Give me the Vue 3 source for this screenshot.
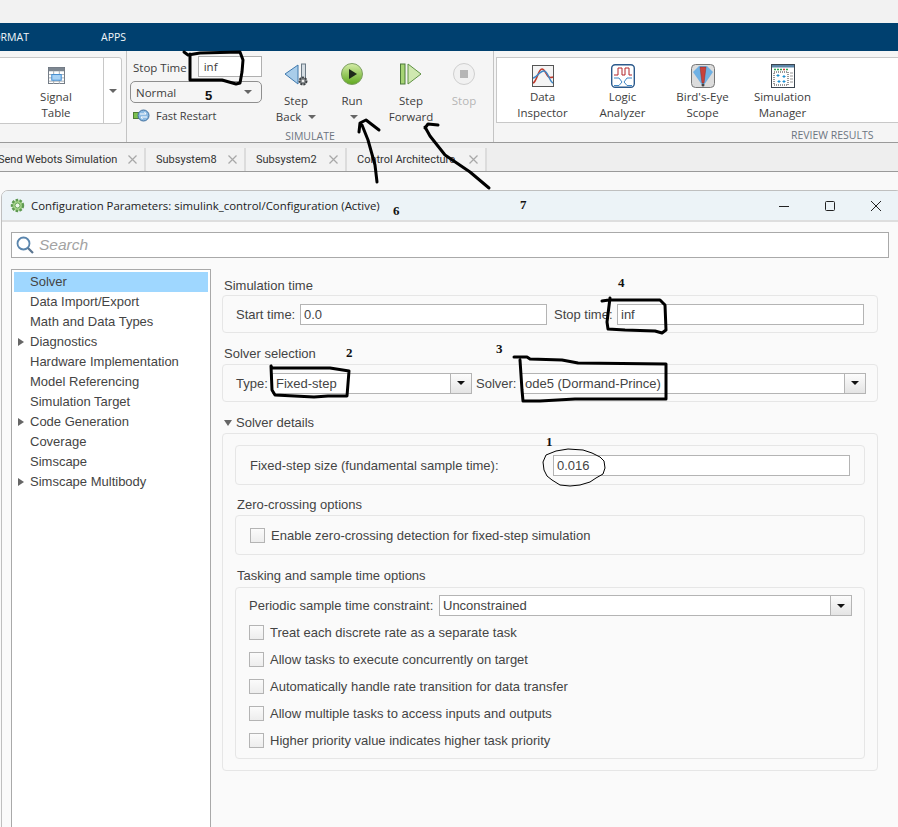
<script setup>
const tabs = [
  { name: 'Send Webots Simulation', width: 148, first: true },
  { name: 'Subsystem8', width: 100 },
  { name: 'Subsystem2', width: 101 },
  { name: 'Control Architecture', width: 140 }
];

const reviewTools = [
  { top: 'Data', bottom: 'Inspector', kind: 'data' },
  { top: 'Logic', bottom: 'Analyzer', kind: 'logic' },
  { top: "Bird's-Eye", bottom: 'Scope', kind: 'bird' },
  { top: 'Simulation', bottom: 'Manager', kind: 'manager' }
];

const treeItems = [
  { name: 'Solver', selected: true },
  { name: 'Data Import/Export' },
  { name: 'Math and Data Types' },
  { name: 'Diagnostics', arrow: true },
  { name: 'Hardware Implementation' },
  { name: 'Model Referencing' },
  { name: 'Simulation Target' },
  { name: 'Code Generation', arrow: true },
  { name: 'Coverage' },
  { name: 'Simscape' },
  { name: 'Simscape Multibody', arrow: true }
];

const taskOptions = [
  'Treat each discrete rate as a separate task',
  'Allow tasks to execute concurrently on target',
  'Automatically handle rate transition for data transfer',
  'Allow multiple tasks to access inputs and outputs',
  'Higher priority value indicates higher task priority'
];

// hand drawn numbers on top of the screenshot
const marks = [
  { text: '5', x: 205, y: 89, sans: true },
  { text: '6', x: 393, y: 204 },
  { text: '7', x: 520, y: 198 },
  { text: '4', x: 618, y: 276 },
  { text: '3', x: 496, y: 342 },
  { text: '2', x: 346, y: 346 },
  { text: '1', x: 546, y: 435 }
];

const strokes = [
  'M184 52 L188 55 L200 53 L240 52 L243 60 L242 72 L240 83 L236 84 L222 80 L190 80 L190 54',
  'M377 182 L375 165 L368 140 L362 125 M359 132 L360 123 L366 120 L379 130',
  'M489 188 L470 172 L445 155 L430 136 L425 127 M425 128 L428 124 L438 125',
  'M602 301 L609 300 L640 300 L660 300 L665 305 L666 330 L662 333 L655 331 L625 330 L608 329 L607 322 L610 298',
  'M514 357 L527 357 L530 359 L562 360 L578 363 L666 364 L666 399 L575 399 L540 401 L523 401 L522 390 L520 360',
  'M271 366 L272 368 L330 368 L349 371 L347 396 L328 396 L314 397 L275 395 L272 390 L271 366'
];

const ring = 'M556 451 L568 449 L583 450 L592 453 L600 457 L604 461 L605 468 L603 474 L596 478 L590 482 L580 485 L570 486 L560 485 L552 480 L547 476 L544 470 L543 462 L546 455 Z';
</script>

<template>
  <div class="page">
    <div class="top-gap"></div>

    <div class="menu-bar">
      <span class="menu-format">FORMAT</span>
      <span class="menu-apps">APPS</span>
    </div>

    <div class="ribbon">
      <div class="group group-prepare">
        <div class="panel prepare-panel">
          <div class="tool signal-tool">
            <svg width="17" height="17" viewBox="0 0 18 18">
              <rect x="0.5" y="0.5" width="17" height="17" fill="#fff" stroke="#6d7680" />
              <rect x="1" y="1" width="16" height="3.5" fill="#7d8791" />
              <path d="M1 8h16M1 11.500h16M1 15h16M6 4v14M12 4v14" stroke="#a5acb3" fill="none" />
              <rect x="4" y="8" width="10" height="6" fill="#a8d2f5" stroke="#3f8bd0" />
            </svg>
            <div class="tool-label">Signal<br />Table</div>
          </div>
          <div class="prepare-more"><i class="caret"></i></div>
        </div>
        <div class="group-label prepare-label">PREPARE</div>
      </div>

      <div class="group group-simulate">
        <div class="sim-row">
          <div class="sim-settings">
            <div class="stop-row">
              <span class="stop-text">Stop Time</span>
              <div class="stop-input">inf</div>
            </div>
            <div class="mode-select">
              <span>Normal</span>
              <i class="caret"></i>
            </div>
            <div class="fast-restart">
              <svg width="17" height="13" viewBox="0 0 17 13">
                <rect x="0.500" y="3.500" width="5" height="6" fill="#7cc04f" stroke="#4e7d35" />
                <circle cx="10.500" cy="6.500" r="5.500" fill="#8dbbe3" stroke="#3f6f9e" />
                <path d="M7 5h6l-1.500-2M14 8H8l1.500 2" stroke="#fff" fill="none" />
              </svg>
              <span>Fast Restart</span>
            </div>
          </div>

          <div class="sim-button back-button">
            <svg width="24" height="26" viewBox="0 0 24 26">
              <path d="M14 5 L1 14 L14 24 Z" fill="#a9cdea" stroke="#3f79ad" stroke-linejoin="round" />
              <rect x="17.500" y="4" width="4" height="16" fill="#d5dde3" stroke="#6b7a86" />
              <circle cx="19" cy="21" r="3.500" fill="#7f8487" stroke="#3e4245" stroke-width="2" stroke-dasharray="2 1" />
              <circle cx="19" cy="21" r="1.300" fill="#eee" />
            </svg>
            <div class="tool-label">Step<br />Back <i class="caret inline-caret"></i></div>
          </div>

          <div class="sim-button run-button">
            <svg width="24" height="26" viewBox="0 0 24 26">
              <defs>
                <linearGradient id="runGreen" x1="0" y1="0" x2="0" y2="1">
                  <stop offset="0" stop-color="#d6eda8" />
                  <stop offset="1" stop-color="#5fa81e" />
                </linearGradient>
              </defs>
              <circle cx="12" cy="14" r="10.500" fill="url(#runGreen)" stroke="#7d9f63" />
              <path d="M9 9 L17 14 L9 19 Z" fill="#1e2a1a" />
            </svg>
            <div class="tool-label">Run<br /><i class="caret inline-caret"></i></div>
          </div>

          <div class="sim-button forward-button">
            <svg width="24" height="26" viewBox="0 0 24 26">
              <rect x="1.500" y="4" width="4.500" height="20" fill="#a6d474" stroke="#4d7a3a" />
              <path d="M9 4 L22 14 L9 24 Z" fill="#cfe8b0" stroke="#5f9143" stroke-linejoin="round" />
            </svg>
            <div class="tool-label">Step<br />Forward</div>
          </div>

          <div class="sim-button stop-button">
            <svg width="24" height="26" viewBox="0 0 24 26">
              <circle cx="12" cy="14" r="10.500" fill="#f1f1f1" stroke="#cfcfcf" />
              <rect x="8" y="10" width="8" height="8" fill="#b5b5b5" />
            </svg>
            <div class="tool-label disabled">Stop</div>
          </div>
        </div>
        <div class="group-label simulate-label">SIMULATE</div>
      </div>

      <div class="group group-review">
        <div class="panel review-panel">
          <div v-for="tool in reviewTools" :key="tool.top" class="tool review-tool">
            <svg v-if="tool.kind === 'data'" width="24" height="24" viewBox="0 0 24 24">
              <rect x="1.500" y="1.500" width="21" height="21" fill="#f4f4f4" stroke="#555" />
              <path d="M2 19 C6 18 7 5 11 5 C15 5 15 16 22 13" stroke="#c0392b" stroke-width="1.500" fill="none" />
              <path d="M2 14 C6 14 8 7 13 7 C17 7 18 17 22 19" stroke="#3f86c4" stroke-width="1.500" fill="none" />
            </svg>
            <svg v-else-if="tool.kind === 'logic'" width="24" height="24" viewBox="0 0 24 24">
              <rect x="0.700" y="0.700" width="22.600" height="22.600" rx="3.500" fill="#fff" stroke="#2c5a8c" stroke-width="1.400" />
              <path d="M3 11H7V4H11V11H14V4H18V11H21" stroke="#b3262a" fill="none" />
              <path d="M3 14H8L11 18L8 21.500H3M21 14H16L13 18L16 21.500H21" stroke="#3f86c4" fill="none" />
            </svg>
            <svg v-else-if="tool.kind === 'bird'" width="24" height="24" viewBox="0 0 24 24">
              <rect x="0.500" y="0.500" width="23" height="23" rx="4" fill="#dcdcdc" stroke="#777" />
              <path d="M2 8 L8 2 H16 L22 8 L13 21 H11 Z" fill="#6fb1e4" />
              <path d="M9 3 H15 L13 19 H11 Z" fill="#c8423c" stroke="#8e2b27" stroke-width="0.500" />
              <circle cx="12" cy="21" r="1.500" fill="#444" />
            </svg>
            <svg v-else width="24" height="24" viewBox="0 0 24 24">
              <rect x="0.500" y="0.500" width="23" height="23" fill="#fff" stroke="#3c4650" />
              <rect x="1" y="1" width="22" height="2.500" fill="#5c86a8" />
              <path d="M3 5.500h2M6 5.500h2M9 5.500h2" stroke="#2fa84f" stroke-width="1.500" />
              <path d="M12 5.500h2" stroke="#d83a3a" stroke-width="1.500" />
              <path d="M15 5.500h2" stroke="#2fa84f" stroke-width="1.500" />
              <rect x="3" y="8" width="14" height="13" fill="#fff" stroke="#333" stroke-dasharray="1 1" />
              <path d="M7 10v3M5.500 11.500h3M13 11v3M11.500 12.500h3M8 16v3M6.500 17.500h3M13 16v3M11.500 17.500h3" stroke="#1b8fd1" />
              <path d="M19 9h3M19 12h3M19 15h3M19 18h3" stroke="#999" />
            </svg>
            <div class="tool-label">{{ tool.top }}<br />{{ tool.bottom }}</div>
          </div>
        </div>
        <div class="group-label review-label">REVIEW RESULTS</div>
      </div>
    </div>

    <div class="tab-strip">
      <div v-for="tab in tabs" :key="tab.name" class="tab" :class="{ 'tab-first': tab.first }" :style="{ width: tab.width + 'px' }">
        <span class="tab-name">{{ tab.name }}</span>
        <svg class="tab-close" width="9" height="9" viewBox="0 0 9 9">
          <path d="M0.500 0.500L8.500 8.500M8.500 0.500L0.500 8.500" stroke="#a8a8a8" stroke-width="1.200" fill="none" />
        </svg>
      </div>
    </div>

    <div class="dialog">
      <div class="title-bar">
        <svg width="15" height="15" viewBox="0 0 15 15">
          <circle cx="7.500" cy="7.500" r="5.500" fill="#a6d48a" stroke="#5f9a52" stroke-width="2.400" stroke-dasharray="2.500 1.400" />
          <circle cx="7.500" cy="7.500" r="2.500" fill="#eef6e8" stroke="#6aa65a" />
        </svg>
        <span class="title-text">Configuration Parameters: simulink_control/Configuration (Active)</span>
        <div class="window-controls">
          <svg width="12" height="12" viewBox="0 0 12 12"><path d="M1 6.500H11" stroke="#222" fill="none" /></svg>
          <svg width="12" height="12" viewBox="0 0 12 12"><rect x="1.500" y="1.500" width="9" height="9" rx="1" stroke="#222" fill="none" /></svg>
          <svg width="12" height="12" viewBox="0 0 12 12"><path d="M1 1L11 11M11 1L1 11" stroke="#222" fill="none" /></svg>
        </div>
      </div>

      <div class="dialog-body">
        <div class="search-box">
          <svg width="18" height="18" viewBox="0 0 18 18">
            <circle cx="7.500" cy="7.500" r="6" fill="none" stroke="#5a85ad" stroke-width="1.800" />
            <path d="M12 12L17 17" stroke="#5a7590" stroke-width="2.200" fill="none" />
          </svg>
          <span>Search</span>
        </div>

        <div class="columns">
          <div class="tree">
            <div v-for="item in treeItems" :key="item.name" class="tree-row" :class="{ selected: item.selected }">
              <i v-if="item.arrow" class="tree-arrow"></i>
              <span>{{ item.name }}</span>
            </div>
          </div>

          <div class="settings">
            <div class="heading">Simulation time</div>
            <div class="box row-box">
              <span class="field-label start-label">Start time:</span>
              <div class="input start-input">0.0</div>
              <span class="field-label stop-label">Stop time:</span>
              <div class="input stop-time-input">inf</div>
            </div>

            <div class="heading solver-heading">Solver selection</div>
            <div class="box row-box">
              <span class="field-label type-label">Type:</span>
              <div class="input combo type-combo">Fixed-step<b class="combo-btn"><i></i></b></div>
              <span class="field-label solver-label">Solver:</span>
              <div class="input combo solver-combo">ode5 (Dormand-Prince)<b class="combo-btn"><i></i></b></div>
            </div>

            <div class="details-heading"><i class="open-arrow"></i>Solver details</div>
            <div class="box details-box">
              <div class="box step-box">
                <span class="field-label step-label">Fixed-step size (fundamental sample time):</span>
                <div class="input step-input">0.016</div>
              </div>

              <div class="heading sub-heading">Zero-crossing options</div>
              <div class="box zero-box">
                <label class="check-row"><i class="check"></i>Enable zero-crossing detection for fixed-step simulation</label>
              </div>

              <div class="heading sub-heading tasking-heading">Tasking and sample time options</div>
              <div class="box task-box">
                <div class="periodic-row">
                  <span class="field-label periodic-label">Periodic sample time constraint:</span>
                  <div class="input combo periodic-combo">Unconstrained<b class="combo-btn"><i></i></b></div>
                </div>
                <label v-for="option in taskOptions" :key="option" class="check-row task-row"><i class="check"></i>{{ option }}</label>
              </div>
            </div>
          </div>
        </div>
      </div>
    </div>

    <svg class="scribbles" width="898" height="827" viewBox="0 0 898 827">
      <path v-for="(d, i) in strokes" :key="i" :d="d" fill="none" stroke="#000" stroke-width="3" stroke-linejoin="round" stroke-linecap="round" />
      <path :d="ring" fill="none" stroke="#000" stroke-width="1" />
    </svg>
    <span v-for="mark in marks" :key="mark.text" class="mark" :class="{ 'mark-sans': mark.sans }" :style="{ left: mark.x + 'px', top: mark.y + 'px' }">{{ mark.text }}</span>
  </div>
</template>

<style>
html,
body {
  margin: 0;
  background: #f8f8f8;
}
</style>

<style scoped>
.page {
  position: relative;
  width: 898px;
  height: 827px;
  overflow: hidden;
  background: #f9f9f9;
  font-family: "Open Sans", "Noto Sans", sans-serif;
  color: #3d3d3d;
}

.top-gap {
  height: 23px;
  background: #f2f2f2;
}

.menu-bar {
  height: 28px;
  background: #00406f;
  color: #f2f6fa;
  font-size: 10.500px;
  line-height: 28px;
  display: flex;
}

.menu-format {
  margin-left: -13px;
  width: 114px;
}

.ribbon {
  height: 92px;
  box-sizing: border-box;
  background: #f5f5f5;
  border-bottom: 1px solid #9a9a9a;
  display: flex;
  font-size: 11.500px;
}

.group {
  display: flex;
  flex-direction: column;
  padding-top: 6px;
  box-sizing: border-box;
  height: 91px;
}

.panel {
  height: 67px;
  box-sizing: border-box;
  background: #fff;
  border: 1px solid #c8c8c8;
  display: flex;
}

.group-label {
  font-size: 10.500px;
  color: #6c7480;
  line-height: 14px;
  margin-top: 5px;
  text-align: center;
  white-space: nowrap;
}

.group-prepare {
  width: 126px;
  flex: none;
}

.prepare-panel {
  width: 123px;
  margin-left: -1px;
  border-radius: 0 3px 3px 0;
}

.prepare-label {
  text-align: left;
  margin-left: -48px;
}

.tool {
  display: flex;
  flex-direction: column;
  align-items: center;
}

.tool-label {
  line-height: 16px;
  text-align: center;
  color: #3d3d3d;
  white-space: nowrap;
}

.signal-tool {
  width: 103px;
  padding-top: 9px;
  padding-left: 9px;
  box-sizing: border-box;
}

.signal-tool .tool-label {
  margin-top: 5px;
}

.prepare-more {
  flex: 1;
  border-left: 1px solid #c8c8c8;
  display: flex;
  align-items: center;
  justify-content: center;
  height: 65px;
  box-sizing: border-box;
}

.caret {
  display: inline-block;
  width: 0;
  height: 0;
  border-left: 4px solid transparent;
  border-right: 4px solid transparent;
  border-top: 4px solid #666;
}

.inline-caret {
  margin-left: 4px;
  vertical-align: 2px;
}

.group-simulate {
  width: 368px;
  flex: none;
  border-left: 1px solid #c4c4c4;
  border-right: 1px solid #c4c4c4;
  padding-top: 5px;
}

.sim-row {
  display: flex;
  height: 69px;
}

.sim-settings {
  width: 141px;
  flex: none;
  padding-left: 3px;
  box-sizing: border-box;
}

.stop-row {
  display: flex;
  align-items: center;
  gap: 11px;
  margin-left: 3px;
  height: 21px;
}

.stop-text {
  padding-top: 2px;
}

.stop-input {
  width: 64px;
  height: 21px;
  box-sizing: border-box;
  border: 1px solid #b0b0b0;
  background: #fff;
  line-height: 19px;
  padding-left: 5px;
}

.mode-select {
  margin-top: 4px;
  width: 132px;
  height: 22px;
  box-sizing: border-box;
  border: 1px solid #8f8f8f;
  border-radius: 5px;
  display: flex;
  align-items: center;
  justify-content: space-between;
  padding: 0 9px 0 5px;
}

.fast-restart {
  display: flex;
  align-items: center;
  gap: 6px;
  margin: 5px 0 0 3px;
  font-size: 11px;
}

.sim-button {
  display: flex;
  flex-direction: column;
  align-items: center;
  flex: none;
  padding-top: 4px;
}

.sim-button .tool-label {
  margin-top: 7px;
}

.back-button {
  width: 56px;
}

.run-button {
  width: 56px;
}

.forward-button {
  width: 62px;
}

.stop-button {
  width: 44px;
}

.disabled {
  color: #b5b5b5;
}

.simulate-label {
  margin: 4px 0 0 -1px;
  width: 368px;
}

.group-review {
  flex: 1;
  padding-left: 2px;
}

.review-panel {
  width: 420px;
  padding-left: 5.500px;
  padding-top: 6px;
  border-right: none;
}

.review-tool {
  width: 80px;
}

.review-tool .tool-label {
  margin-top: 1px;
}

.review-label {
  text-align: left;
  margin-left: 295px;
}

.tab-strip {
  height: 29px;
  box-sizing: border-box;
  padding-top: 5px;
  display: flex;
  font-family: Roboto, sans-serif;
  font-size: 11px;
  background: #eeeeee;
  border-bottom: 1px solid #9a9a9a;
}

.tab {
  height: 23px;
  box-sizing: border-box;
  background: #f2f2f2;
  border-right: 2px solid #dcdcdc;
  display: flex;
  align-items: center;
  justify-content: space-between;
  padding: 0 7px 0 10px;
  color: #333;
  white-space: nowrap;
  flex: none;
}

.tab:first-child {
  margin-left: -2px;
}

.tab-first {
  padding-left: 0;
}

.dialog {
  margin: 18px 0 0 1px;
  width: 900px;
  border: 1px solid #bfbfbf;
  border-radius: 7px 7px 0 0;
  overflow: hidden;
  background: #fafafa;
  font-family: "Liberation Sans", Arial, sans-serif;
  font-size: 13px;
  height: 640px;
}

.title-bar {
  height: 31px;
  box-sizing: border-box;
  background: #ecf3f7;
  border-bottom: 2px solid #dedede;
  display: flex;
  align-items: center;
  padding-left: 8px;
  font-family: "Open Sans", sans-serif;
  font-size: 11.400px;
  color: #222;
}

.title-text {
  margin-left: 6px;
}

.window-controls {
  margin-left: auto;
  margin-right: 20px;
  display: flex;
  gap: 34px;
}

.dialog-body {
  padding: 10px 0 0 9px;
}

.search-box {
  width: 878px;
  height: 26px;
  box-sizing: border-box;
  border: 1px solid #a9a9a9;
  background: #fff;
  display: flex;
  align-items: center;
  gap: 5px;
  padding-left: 4px;
  font-size: 15.500px;
  font-style: italic;
  color: #a3a3a3;
}

.columns {
  display: flex;
  margin-top: 11px;
}

.tree {
  width: 200px;
  height: 560px;
  box-sizing: border-box;
  flex: none;
  border: 1px solid #a9a9a9;
  background: #fff;
  padding: 2px;
}

.tree-row {
  position: relative;
  height: 20px;
  line-height: 20px;
  padding-left: 16px;
  color: #444;
}

.selected {
  background: #9fd7ff;
}

.tree-arrow {
  position: absolute;
  left: 4px;
  top: 6px;
  width: 0;
  height: 0;
  border-top: 4px solid transparent;
  border-bottom: 4px solid transparent;
  border-left: 6px solid #666;
}

.settings {
  width: 656px;
  margin-left: 11px;
  flex: none;
}

.heading {
  line-height: 16px;
  margin: 9px 0 1px 2px;
  color: #444;
}

.box {
  border: 1px solid #e6e6e6;
  border-radius: 4px;
  box-sizing: border-box;
}

.row-box {
  height: 38px;
  display: flex;
  align-items: center;
  padding-left: 13px;
}

.field-label {
  color: #444;
  white-space: nowrap;
  flex: none;
}

.input {
  height: 21px;
  line-height: 19px;
  box-sizing: border-box;
  border: 1px solid #b4b4b4;
  background: #fff;
  padding-left: 3px;
  color: #444;
  flex: none;
}

.start-label {
  width: 64px;
}

.start-input {
  width: 247px;
}

.stop-label {
  margin-left: 7px;
  width: 63px;
}

.stop-time-input {
  width: 247px;
}

.solver-heading {
  margin-top: 13px;
  margin-bottom: 2px;
}

.combo {
  position: relative;
}

.combo-btn {
  position: absolute;
  right: 0;
  top: 0;
  width: 21px;
  height: 19px;
  box-sizing: border-box;
  border-left: 1px solid #b4b4b4;
  background: linear-gradient(#fcfcfc, #e4e4e4);
  display: flex;
  align-items: center;
  justify-content: center;
}

.combo-btn i {
  width: 0;
  height: 0;
  border-left: 4px solid transparent;
  border-right: 4px solid transparent;
  border-top: 4px solid #111;
}

.type-label {
  width: 36px;
}

.type-combo {
  width: 200px;
}

.solver-label {
  margin-left: 4px;
  width: 45px;
}

.solver-combo {
  width: 345px;
}

.details-heading {
  margin: 13px 0 2px 2px;
  line-height: 16px;
  color: #444;
  display: flex;
  align-items: center;
}

.open-arrow {
  width: 0;
  height: 0;
  border-left: 4px solid transparent;
  border-right: 4px solid transparent;
  border-top: 6px solid #666;
  margin-right: 4px;
}

.details-box {
  height: 338px;
  padding: 11px 12px 0;
}

.step-box {
  height: 40px;
  display: flex;
  align-items: center;
  padding-left: 14px;
}

.step-label {
  width: 303px;
}

.step-input {
  width: 297px;
}

.sub-heading {
  margin-top: 12px;
  margin-bottom: 2px;
}

.tasking-heading {
  margin-top: 13px;
  margin-bottom: 3px;
}

.zero-box {
  height: 40px;
  display: flex;
  align-items: center;
  padding-left: 14px;
  width: 630px;
}

.check-row {
  display: flex;
  align-items: center;
  color: #444;
  white-space: nowrap;
}

.check {
  width: 15px;
  height: 15px;
  box-sizing: border-box;
  border: 1px solid #b4b4b4;
  background: linear-gradient(#fbfbfb, #ededed);
  margin-right: 6px;
  flex: none;
}

.task-box {
  height: 172px;
  width: 630px;
  padding: 7px 12px 0 13px;
}

.periodic-row {
  display: flex;
  align-items: center;
  margin-bottom: 3px;
}

.periodic-label {
  width: 190px;
}

.periodic-combo {
  width: 413px;
}

.task-row {
  height: 27px;
}

.scribbles {
  position: absolute;
  left: 0;
  top: 0;
  pointer-events: none;
}

.mark {
  position: absolute;
  font-family: "Liberation Serif", serif;
  font-weight: 700;
  font-size: 13px;
  line-height: 14px;
  color: #111;
}

.mark-sans {
  font-family: "Liberation Sans", sans-serif;
}
</style>
